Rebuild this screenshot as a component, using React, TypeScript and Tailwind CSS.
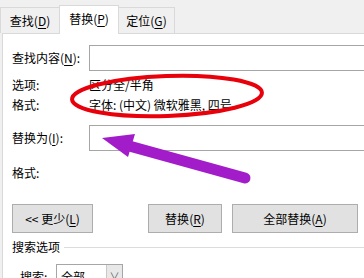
import React from 'react';

const font = { fontFamily: '"Noto Sans CJK SC", "Noto Sans", sans-serif' };

function Key({ k }: { k: string }) {
  return (
    <>
      (<span className="underline underline-offset-2">{k}</span>)
    </>
  );
}

export default function App() {
  return (
    <div
      className="relative w-[364px] h-[278px] overflow-hidden bg-[#f0f0f0] text-[12px] leading-[16px] text-black"
      style={font}
    >
      {/* Tabs */}
      <div className="flex items-end h-[33px]">
        <div className="w-[59px] h-[26px] border-l border-t border-[#d9d9d9] bg-[#f0f0f0] flex items-center justify-center pt-[1px]">
          查找<Key k="D" />
        </div>
        <div className="relative z-10 w-[60px] h-[29px] -mb-[1px] border-l border-t border-r border-[#d9d9d9] bg-white flex items-center justify-center pb-[3px]">
          替换<Key k="P" />
        </div>
        <div className="w-[56px] h-[26px] border-t border-r border-[#d9d9d9] bg-[#f0f0f0] flex items-center justify-center pt-[1px]">
          定位<Key k="G" />
        </div>
      </div>

      {/* Panel */}
      <div className="ml-[2px] h-[245px] border-l border-t border-[#d9d9d9] bg-white pl-[9px] flex flex-col">
        <div className="mt-[11px] flex items-center h-[26px]">
          <div className="w-[77px] shrink-0">
            查找内容(<span className="underline underline-offset-2">N</span>):
          </div>
          <div className="w-[300px] shrink-0 h-[26px] border border-[#a6a6a6] bg-white" />
        </div>

        <div className="mt-[6px] flex">
          <div className="w-[77px] shrink-0">选项:</div>
          <div>区分全/半角</div>
        </div>
        <div className="mt-[4px] flex">
          <div className="w-[77px] shrink-0">格式:</div>
          <div className="whitespace-nowrap">字体: (中文) 微软雅黑, 四号</div>
        </div>

        <div className="mt-[12px] flex items-center h-[26px]">
          <div className="w-[77px] shrink-0">
            替换为(<span className="underline underline-offset-2">I</span>):
          </div>
          <div className="w-[300px] shrink-0 h-[26px] border border-[#a6a6a6] bg-white" />
        </div>

        <div className="mt-[14px] flex">
          <div className="w-[77px] shrink-0">格式:</div>
        </div>

        <div className="mt-[23px] flex h-[29px]">
          <button className="w-[81px] h-[29px] border border-[#adadad] bg-[#e1e1e1] flex items-center justify-center">
            &lt;&lt; 更少<Key k="L" />
          </button>
          <button className="ml-[55px] w-[74px] h-[29px] border border-[#adadad] bg-[#e1e1e1] flex items-center justify-center">
            替换<Key k="R" />
          </button>
          <button className="ml-[10px] w-[126px] h-[29px] border border-[#adadad] bg-[#e1e1e1] flex items-center justify-center">
            全部替换<Key k="A" />
          </button>
        </div>

        <div className="mt-[6px] flex items-center">
          <div className="whitespace-nowrap">搜索选项</div>
          <div className="ml-[4px] flex-1 h-px bg-[#dcdcdc]" />
        </div>

        <div className="mt-[9px] flex items-start">
          <div className="ml-[8px] w-[36px] pt-[5px]">搜索:</div>
          <div className="flex h-[24px] w-[67px] border border-[#a6a6a6] bg-white">
            <div className="flex-1 pl-[4px] pt-[4px]">全部</div>
            <div className="w-[16px] border-l border-[#c8c8c8] bg-[#e8e8e8] flex items-center justify-center text-[#606060] text-[10px]">
              ∨
            </div>
          </div>
        </div>
      </div>

      {/* Annotations */}
      <svg
        className="absolute inset-0 pointer-events-none"
        width="364"
        height="278"
        viewBox="0 0 364 278"
      >
        <ellipse
          cx="167"
          cy="96"
          rx="95"
          ry="20"
          fill="none"
          stroke="#e8000b"
          strokeWidth="4"
          transform="rotate(-2 167 96)"
        />
        <line
          x1="122"
          y1="144"
          x2="245"
          y2="178"
          stroke="#a31cc9"
          strokeWidth="11"
          strokeLinecap="round"
        />
        <polygon points="102,138 135,134 128,157" fill="#a31cc9" />
      </svg>
    </div>
  );
}
